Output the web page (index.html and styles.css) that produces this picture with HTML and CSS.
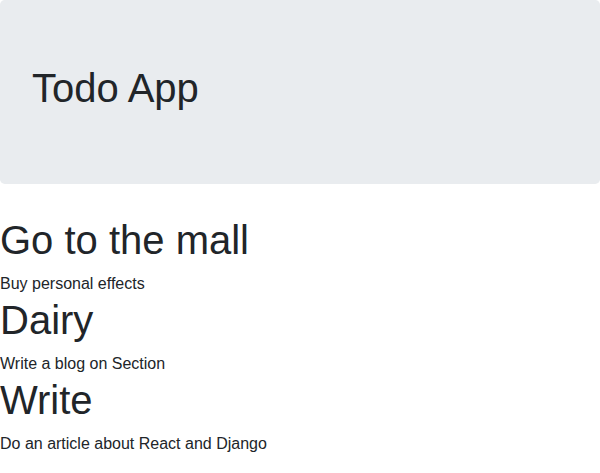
FILE: index.html
```html
<!DOCTYPE html>
<html lang="en">
<head>
<meta charset="utf-8">
<title>Todo App</title>
<link rel="stylesheet" href="styles.css">
</head>
<body>
<div class="jumbotron">
  <h1 class="title">Todo App</h1>
</div>
<div class="todos">
  <div class="todo">
    <h1 class="todo-title">Go to the mall</h1>
    <span class="todo-desc">Buy personal effects</span>
  </div>
  <div class="todo">
    <h1 class="todo-title">Dairy</h1>
    <span class="todo-desc">Write a blog on Section</span>
  </div>
  <div class="todo">
    <h1 class="todo-title">Write</h1>
    <span class="todo-desc">Do an article about React and Django</span>
  </div>
</div>
</body>
</html>
```
FILE: styles.css
```css
html, body {
  margin: 0;
  padding: 0;
}
body {
  font-family: "Liberation Sans", Arial, sans-serif;
  font-size: 16px;
  line-height: 1.5;
  color: #212529;
  background: #fff;
}
.jumbotron {
  background: #e9ecef;
  padding: 64px 32px;
  border-radius: 4.8px;
  margin-bottom: 32px;
}
h1 {
  font-size: 40px;
  font-weight: 500;
  line-height: 1.2;
  margin: 0 0 8px 0;
}
.todo-desc {
  display: block;
}
```
